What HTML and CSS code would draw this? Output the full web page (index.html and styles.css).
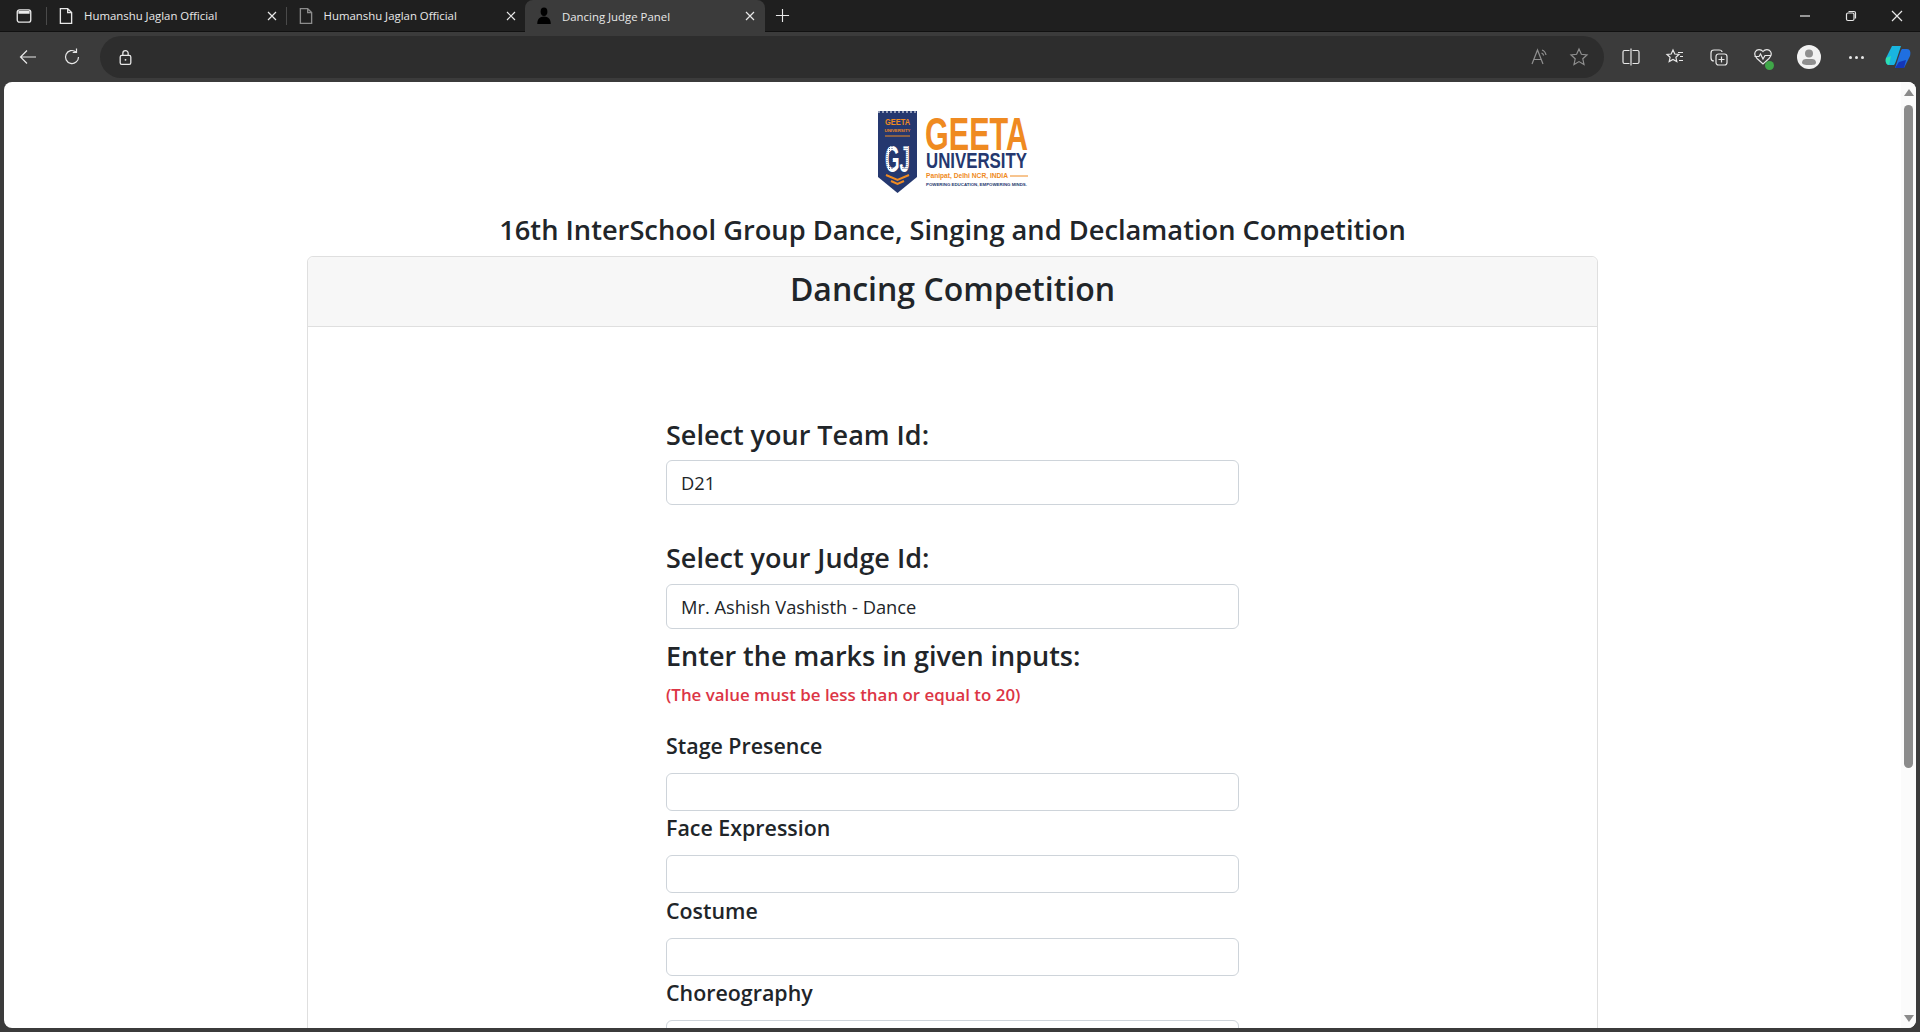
FILE: index.html
```html
<!DOCTYPE html>
<html lang="en">
<head>
    <meta charset="UTF-8">
    <title>Dancing Judge Panel</title>
    <link rel="stylesheet" href="styles.css">
</head>
<body>
    <div class="tabBar">
        <svg class="icon sideIcon" viewBox="0 0 16 16"><rect x="2" y="2.5" width="12" height="11" rx="2"/><path class="solid" d="M3 3.5h10v2.5H3z"/></svg>
        <span class="tabSep"></span>
        <div class="tab">
            <svg class="icon docIcon" viewBox="0 0 16 16"><path d="M3 1.5h6.500l3.500 3.500v9.500H3zM9.500 1.500V5H13"/></svg>
            <span class="tabTitle">Humanshu Jaglan Official</span>
            <svg class="icon closeIcon" viewBox="0 0 10 10"><path d="M1 1l8 8M9 1l-8 8"/></svg>
        </div>
        <span class="tabSep"></span>
        <div class="tab">
            <svg class="icon docIcon dim" viewBox="0 0 16 16"><path d="M3 1.5h6.500l3.500 3.500v9.500H3zM9.500 1.500V5H13"/></svg>
            <span class="tabTitle">Humanshu Jaglan Official</span>
            <svg class="icon closeIcon" viewBox="0 0 10 10"><path d="M1 1l8 8M9 1l-8 8"/></svg>
        </div>
        <div class="tab active">
            <svg class="personIcon" viewBox="0 0 16 16"><ellipse cx="8" cy="4.200" rx="3" ry="3.700"/><path d="M2 15c0-4 2-6.500 6-6.500s6 2.500 6 6.500z"/></svg>
            <span class="tabTitle">Dancing Judge Panel</span>
            <svg class="icon closeIcon" viewBox="0 0 10 10"><path d="M1 1l8 8M9 1l-8 8"/></svg>
        </div>
        <svg class="icon plusIcon" viewBox="0 0 16 16"><path d="M8 1v14M1 8h14"/></svg>
        <div class="winBtns">
            <svg class="icon" viewBox="0 0 12 12"><path d="M1 6h10"/></svg>
            <svg class="icon" viewBox="0 0 12 12"><rect x="1.500" y="3" width="7.500" height="7.500" rx="1.500"/><path d="M3.500 1.500h5.500a1.500 1.500 0 0 1 1.500 1.500v5.500"/></svg>
            <svg class="icon" viewBox="0 0 12 12"><path d="M1 1l10 10M11 1L1 11"/></svg>
        </div>
    </div>

    <div class="toolBar">
        <svg class="icon navBtn" viewBox="0 0 20 20"><path d="M18 10H2.500M9 3.500L2.500 10 9 16.500"/></svg>
        <svg class="icon navBtn" viewBox="0 0 20 20"><path d="M16.500 10a6.500 6.500 0 1 1-2.500-5.100M14.500 1.500v3.800h-3.800"/></svg>
        <div class="urlBar">
            <svg class="icon lockIcon" viewBox="0 0 16 16"><rect x="3" y="6" width="10" height="8.500" rx="1.500"/><path d="M5.500 6V4a2.500 2.500 0 0 1 5 0v2"/><circle class="solid" cx="8" cy="10.200" r="0.900"/></svg>
            <div class="urlRight">
                <svg class="icon grey" viewBox="0 0 20 20"><path d="M3 17L8.500 3 14 17M5 12.500h7M13 3c2.500 .8 3.500 2.500 4 5M12.500 6c1 .4 1.800 1.300 2.200 2.500"/></svg>
                <svg class="icon grey" viewBox="0 0 20 20"><path d="M10 2l2.400 5.300 5.600.6-4.200 3.900 1.200 5.700-5-2.900-5 2.900 1.200-5.700L2 7.900l5.600-.6z"/></svg>
            </div>
        </div>
        <div class="toolIcons">
            <svg class="icon" viewBox="0 0 20 20"><path d="M8.500 3.500H3.500a1.500 1.500 0 0 0-1.500 1.500v10a1.500 1.500 0 0 0 1.500 1.500h5M11.500 3.500h5a1.500 1.500 0 0 1 1.500 1.500v10a1.500 1.500 0 0 1-1.500 1.500h-5M10 1.500v17"/></svg>
            <svg class="icon" viewBox="0 0 20 20"><path d="M8 3l1.800 4 4.200.4-3.100 2.900.9 4.200L8 12.400l-3.800 2.100.9-4.200L2 7.400l4.200-.4zM13 5.500h5M15 9.500h3M14 13.500h4"/></svg>
            <svg class="icon" viewBox="0 0 20 20"><path d="M5 14c-2 0-3-1-3-3V6c0-2 1-3 3-3h5c2 0 3 1 3 2"/><rect x="7" y="7" width="11" height="11" rx="2.500"/><path d="M12.500 9.500v6M9.500 12.500h6"/></svg>
            <div class="healthWrap">
                <svg class="icon" viewBox="0 0 20 20"><path d="M10 4.500C8 2 4 2 2.500 4.500 1 7 2 9.500 4 11.500l6 5.500 6-5.500c2-2 3-4.500 1.500-7C16 2 12 2 10 4.500zM1.500 9.500H6l1.500-2.500 2.500 5 2-3.500h6.500"/></svg>
                <span class="healthDot"></span>
            </div>
            <div class="avatar">
                <svg viewBox="0 0 24 24"><circle cx="12" cy="8.500" r="4"/><path d="M5 17.500c0-2.500 2-3.500 4-3.500h6c2 0 4 1 4 3.500S16 20 12 20s-7-.500-7-2.500z"/></svg>
            </div>
            <div class="moreDots"><span></span><span></span><span></span></div>
            <svg class="copilot" viewBox="0 0 26 24">
                <path fill="#19b5e0" d="M7 1h9l-4 12c-1 3-2 6-3 7H4C1 20 0 17 1 13z"/>
                <path fill="#1f6fe0" d="M19 23h-9l4-12c1-3 2-6 3-7h5c3 0 4 3 3 7z"/>
                <path fill="#2ee0b0" d="M1 13l5-2-2 9c-2 0-4-3-3-7z"/>
                <path fill="#1436b8" d="M14 17l7-2-2 8h-9z"/>
            </svg>
        </div>
    </div>

    <div class="window">
        <div class="page">
            <div class="content">
                <div class="logoBox">
                    <svg class="logo" viewBox="0 0 150 84">
                        <path fill="#25386f" d="M0 0h39v66L19.500 82 0 66z"/>
                        <path fill="none" stroke="#fff" stroke-width="1" stroke-dasharray="2 2" d="M0 1h39"/>
                        <text x="19.500" y="14" class="logoSmall" fill="#ef8a21" text-anchor="middle" textLength="25" lengthAdjust="spacingAndGlyphs">GEETA</text>
                        <text x="19.500" y="21" class="logoTiny" fill="#ef8a21" text-anchor="middle" textLength="26" lengthAdjust="spacingAndGlyphs">UNIVERSITY</text>
                        <path stroke="#ef8a21" stroke-width="1" d="M7 25h25"/>
                        <text x="19.500" y="61" class="logoGJ" fill="#fff" text-anchor="middle" textLength="25" lengthAdjust="spacingAndGlyphs">GJ</text>
                        <path fill="none" stroke="#25386f" stroke-width=".8" stroke-dasharray="1 1" d="M9 35v24M11.500 35v24M14 35v24M25 35v24M27 35v24M29 35v24"/>
                        <path fill="none" stroke="#ef8a21" stroke-width="2" d="M8 64l11.500 5 11.500-5M13 70l6.500 3 6.500-3"/>
                        <text x="47" y="39" class="logoGeeta" fill="#ef8a21" textLength="103" lengthAdjust="spacingAndGlyphs">GEETA</text>
                        <text x="48" y="57" class="logoUni" fill="#25386f" textLength="101" lengthAdjust="spacingAndGlyphs">UNIVERSITY</text>
                        <text x="48" y="67" class="logoPlace" fill="#ef8a21" textLength="82" lengthAdjust="spacingAndGlyphs">Panipat, Delhi NCR, INDIA</text>
                        <path stroke="#ef8a21" stroke-width="1" d="M132 65h18"/>
                        <text x="48" y="75" class="logoTag" fill="#25386f" textLength="101" lengthAdjust="spacingAndGlyphs">POWERING EDUCATION, EMPOWERING MINDS.</text>
                    </svg>
                </div>
                <h1 class="pageTitle">16th InterSchool Group Dance, Singing and Declamation Competition</h1>
                <div class="card">
                    <div class="cardHeader">
                        <h2>Dancing Competition</h2>
                    </div>
                    <div class="cardBody">
                        <form class="judgeForm">
                            <h3 class="teamLabel">Select your Team Id:</h3>
                            <input class="bigInput first" type="text" value="D21">
                            <h3 class="judgeLabel">Select your Judge Id:</h3>
                            <input class="bigInput" type="text" value="Mr. Ashish Vashisth - Dance">
                            <h3 class="marksLabel">Enter the marks in given inputs:</h3>
                            <p class="marksNote">(The value must be less than or equal to 20)</p>
                            <div class="markField first">
                                <label>Stage Presence</label>
                                <input type="text">
                            </div>
                            <div class="markField">
                                <label>Face Expression</label>
                                <input type="text">
                            </div>
                            <div class="markField">
                                <label>Costume</label>
                                <input type="text">
                            </div>
                            <div class="markField">
                                <label>Choreography</label>
                                <input type="text">
                            </div>
                        </form>
                    </div>
                </div>
            </div>
            <div class="scrollBar">
                <span class="arrowUp"></span>
                <span class="thumb"></span>
                <span class="arrowDown"></span>
            </div>
        </div>
    </div>
</body>
</html>
```

FILE: styles.css
```css
* {
    box-sizing: border-box;
    margin: 0;
    padding: 0;
}
html, body {
    height: 100%;
    overflow: hidden;
}
body {
    display: flex;
    flex-direction: column;
    background-color: #3b3b3b;
    color: #212529;
    font-family: "Open Sans", "Noto Sans", sans-serif;
}

/* browser chrome */
.icon {
    width: 20px;
    height: 20px;
    flex: none;
    fill: none;
    stroke: #e8e8e8;
    stroke-width: 1.2;
}
.icon .solid {
    fill: #e8e8e8;
    stroke: none;
}
.icon.grey {
    stroke: #8f8f8f;
}
.tabBar {
    display: flex;
    align-items: center;
    height: 32px;
    padding-left: 15px;
    background-color: #1f1f1f;
    border-bottom: 1px solid #111;
}
.sideIcon {
    width: 18px;
    height: 18px;
    margin-right: 13px;
}
.tabSep {
    width: 1px;
    height: 18px;
    flex: none;
    background-color: #4a4a4a;
}
.tab {
    display: flex;
    align-items: center;
    width: 238.5px;
    height: 32px;
    padding: 0 9px 0 10px;
    color: #e8e8e8;
    font-size: 11.4px;
}
.tab.active {
    align-self: flex-start;
    width: 240px;
    height: 33px;
    padding-right: 10px;
    padding-bottom: 1px;
    background-color: #3b3b3b;
    border-radius: 8px 8px 0 0;
}
.docIcon {
    width: 18px;
    height: 20px;
    margin-right: 9px;
}
.docIcon.dim {
    stroke: #8c8c8c;
}
.personIcon {
    width: 18px;
    height: 18px;
    flex: none;
    margin-right: 9px;
    fill: #000;
}
.tabTitle {
    flex: 1;
    white-space: nowrap;
    overflow: hidden;
}
.closeIcon {
    width: 10px;
    height: 10px;
}
.plusIcon {
    width: 15px;
    height: 15px;
    margin-left: 10px;
}
.winBtns {
    display: flex;
    align-items: center;
    gap: 34px;
    margin-left: auto;
    padding-right: 17px;
}
.winBtns .icon {
    width: 12px;
    height: 12px;
}
.toolBar {
    display: flex;
    align-items: center;
    height: 50px;
    padding-left: 18px;
    background-color: #3b3b3b;
}
.navBtn {
    margin-right: 24px;
}
.urlBar {
    display: flex;
    align-items: center;
    width: 1504px;
    height: 42px;
    margin-left: -6px;
    padding: 0 15px 0 17px;
    background-color: #2d2d2d;
    border-radius: 21px;
}
.lockIcon {
    width: 17px;
    height: 17px;
}
.urlRight {
    display: flex;
    align-items: center;
    gap: 20px;
    margin-left: auto;
}
.toolIcons {
    display: flex;
    align-items: center;
    flex: 1;
    padding-left: 17px;
}
.toolIcons > .icon {
    margin-right: 24px;
}
.healthWrap {
    position: relative;
    width: 20px;
    height: 20px;
    margin-right: 24px;
}
.healthDot {
    position: absolute;
    right: -1px;
    bottom: -3px;
    width: 9px;
    height: 9px;
    background-color: #3fa648;
    border-radius: 50%;
}
.avatar {
    width: 24px;
    height: 24px;
    margin-right: 28px;
    background-color: #f2f2f2;
    border-radius: 50%;
}
.avatar svg {
    display: block;
    fill: #8f8f8f;
}
.moreDots {
    display: flex;
    gap: 3px;
    margin-right: 21px;
}
.moreDots span {
    width: 3px;
    height: 3px;
    background-color: #e8e8e8;
    border-radius: 50%;
}
.copilot {
    width: 26px;
    height: 24px;
}

/* page */
.window {
    flex: 1;
    min-height: 0;
    padding: 0 4px 4px 4px;
}
.page {
    display: flex;
    height: 100%;
    background-color: #fff;
    border-radius: 8px;
    overflow: hidden;
}
.content {
    flex: 1;
    min-width: 0;
}
.logoBox {
    display: flex;
    justify-content: center;
    padding-top: 29px;
}
.logo {
    width: 150px;
    height: 84px;
    overflow: visible;
}
.logo text {
    font-family: "Liberation Sans", sans-serif;
    font-weight: 700;
}
.logoSmall { font-size: 9px; }
.logoTiny { font-size: 4px; }
.logoGJ { font-size: 36px; }
.logoGeeta { font-size: 46px; }
.logoUni { font-size: 22px; }
.logoPlace { font-size: 7px; }
.logoTag { font-size: 4px; }
.pageTitle {
    margin-top: 16px;
    font-size: 27.25px;
    font-weight: 600;
    line-height: 38px;
    text-align: center;
}
.card {
    width: 1291px;
    margin: 7px auto 0;
    border: 1px solid #dfdfdf;
    border-radius: 6px;
}
.cardHeader {
    height: 70px;
    padding-top: 12px;
    background-color: #f7f7f7;
    border-bottom: 1px solid #dfdfdf;
    border-radius: 6px 6px 0 0;
}
.cardHeader h2 {
    font-size: 32px;
    font-weight: 600;
    line-height: 40px;
    text-align: center;
}
.judgeForm {
    width: 573px;
    margin: 0 auto;
    padding-top: 91px;
}
.judgeForm h3 {
    font-size: 27px;
    font-weight: 600;
    line-height: 34px;
}
.judgeLabel {
    margin-top: 36px;
}
.marksLabel {
    margin-top: 10px;
}
.judgeForm input {
    display: block;
    width: 100%;
    height: 38px;
    padding: 0 14px;
    color: #212529;
    font-family: inherit;
    font-size: 18.3px;
    background-color: #fff;
    border: 1px solid #ced4da;
    border-radius: 6px;
}
.judgeForm .bigInput {
    height: 45px;
    margin-top: 9px;
}
.judgeForm .bigInput.first {
    margin-top: 8px;
}
.marksNote {
    margin-top: 10px;
    color: #dc3545;
    font-size: 16.9px;
    font-weight: 600;
    line-height: 24px;
}
.markField {
    margin-top: 2.5px;
}
.markField.first {
    margin-top: 23.5px;
}
.markField label {
    display: block;
    margin-bottom: 12px;
    font-size: 21.4px;
    font-weight: 600;
    line-height: 30px;
}

/* scrollbar */
.scrollBar {
    display: flex;
    flex-direction: column;
    align-items: center;
    width: 15px;
    flex: none;
    background-color: #fbfbfb;
    padding: 7px 0 6px;
}
.arrowUp, .arrowDown {
    width: 0;
    height: 0;
    border-left: 5px solid transparent;
    border-right: 5px solid transparent;
}
.arrowUp {
    border-bottom: 7px solid #8b8b8b;
}
.arrowDown {
    margin-top: auto;
    border-top: 7px solid #8b8b8b;
}
.thumb {
    width: 9px;
    height: 663px;
    margin-top: 9px;
    background-color: #8b8b8b;
    border-radius: 5px;
}
```
